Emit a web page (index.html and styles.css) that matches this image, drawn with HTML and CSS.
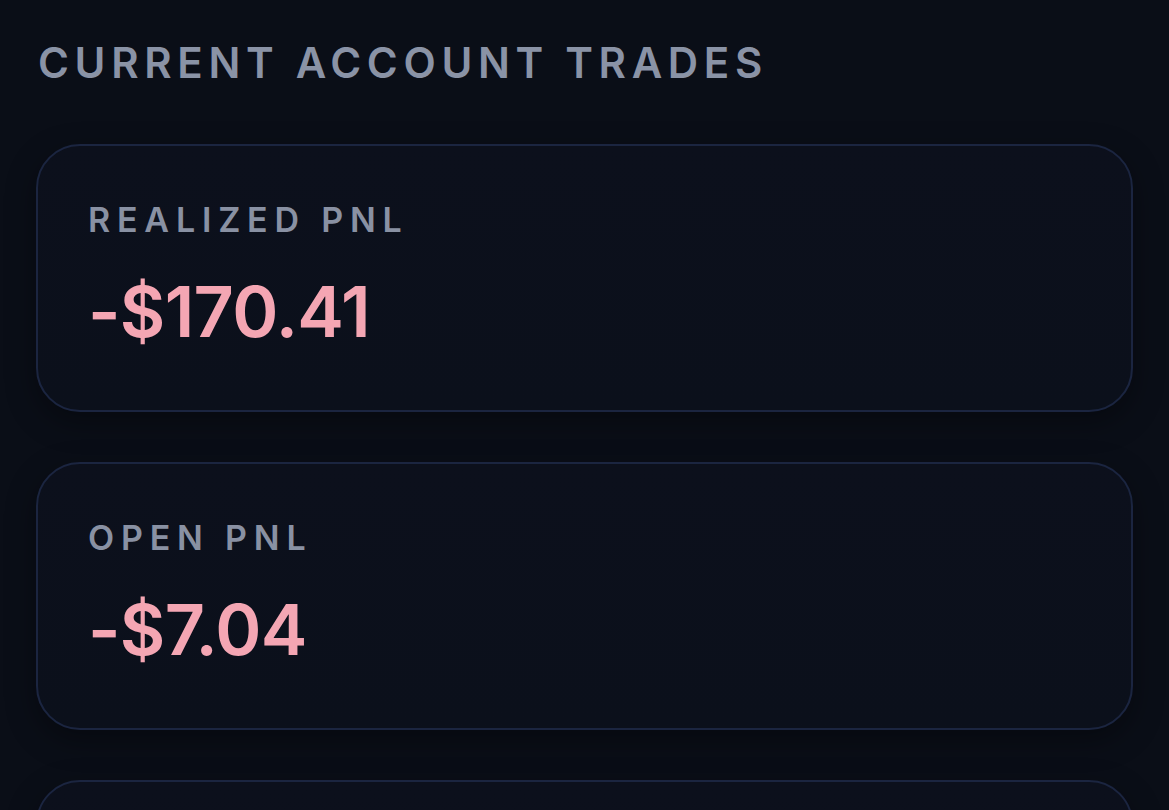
FILE: index.html
```html
<!DOCTYPE html>
<html lang="en">
<head>
    <meta charset="UTF-8">
    <meta name="viewport" content="width=device-width, initial-scale=1.0">
    <title>Current Account Trades</title>
    <link rel="stylesheet" href="styles.css">
</head>
<body>

    <!-- 見出し -->
    <h1 class="section-title">Current Account Trades</h1>

    <!-- PnLカード -->
    <div class="card-list">
        <div class="stat-card">
            <div class="stat-label">Realized PnL</div>
            <div class="stat-value negative">-$170.41</div>
        </div>
        <div class="stat-card">
            <div class="stat-label">Open PnL</div>
            <div class="stat-value negative">-$7.04</div>
        </div>
        <!-- 画面外に続くカード -->
        <div class="stat-card"></div>
    </div>

</body>
</html>
```

FILE: styles.css
```css
/* ページ全体 */
body {
    margin: 0;
    padding: 0 36px;
    height: 100vh;
    box-sizing: border-box;
    background-color: #0a0e17;
    font-family: Inter, 'Liberation Sans', sans-serif;
    color: #8a93a6;
    overflow: hidden;
}

/* 見出し */
.section-title {
    margin: 0;
    padding: 38px 0 0 2px;
    font-size: 42px;
    font-weight: 600;
    line-height: 50px;
    letter-spacing: 0.135em;
    text-transform: uppercase;
    color: #8a93a6;
}

/* カード一覧 */
.card-list {
    display: flex;
    flex-direction: column;
    gap: 50px;
    margin-top: 56px;
}

/* カード */
.stat-card {
    height: 268px;
    flex-shrink: 0;
    box-sizing: border-box;
    padding: 52px 50px 0;
    border: 2px solid #1b2540;
    border-radius: 44px;
    background: linear-gradient(180deg, #0c101c 0%, #0b101b 100%);
    box-shadow: 0 10px 30px rgba(0, 0, 0, 0.35);
}

.stat-label {
    font-size: 34px;
    font-weight: 600;
    line-height: 44px;
    letter-spacing: 0.2em;
    text-transform: uppercase;
    color: #8991a3;
}

.stat-value {
    margin-top: 30px;
    font-size: 70px;
    font-weight: 600;
    line-height: 80px;
    letter-spacing: -0.01em;
    color: #e6e9f0;
}

.stat-value.negative {
    color: #f4a6b3;
}
```
